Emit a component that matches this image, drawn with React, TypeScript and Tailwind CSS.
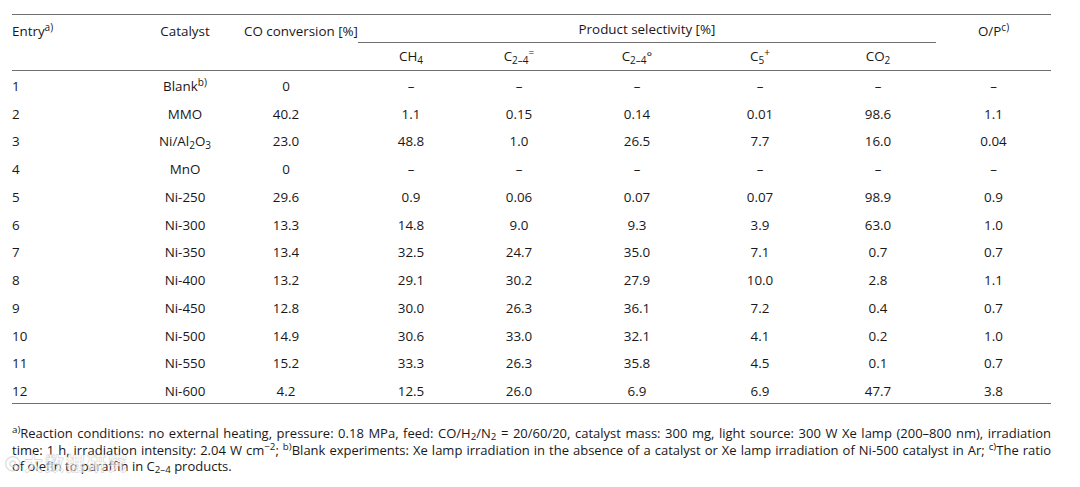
const rows: [string, React.ReactNode, string, string, string, string, string, string, string][] = [
  ["1", <>Blank<sup>b)</sup></>, "0", "–", "–", "–", "–", "–", "–"],
  ["2", "MMO", "40.2", "1.1", "0.15", "0.14", "0.01", "98.6", "1.1"],
  ["3", <>Ni/Al<sub>2</sub>O<sub>3</sub></>, "23.0", "48.8", "1.0", "26.5", "7.7", "16.0", "0.04"],
  ["4", "MnO", "0", "–", "–", "–", "–", "–", "–"],
  ["5", "Ni-250", "29.6", "0.9", "0.06", "0.07", "0.07", "98.9", "0.9"],
  ["6", "Ni-300", "13.3", "14.8", "9.0", "9.3", "3.9", "63.0", "1.0"],
  ["7", "Ni-350", "13.4", "32.5", "24.7", "35.0", "7.1", "0.7", "0.7"],
  ["8", "Ni-400", "13.2", "29.1", "30.2", "27.9", "10.0", "2.8", "1.1"],
  ["9", "Ni-450", "12.8", "30.0", "26.3", "36.1", "7.2", "0.4", "0.7"],
  ["10", "Ni-500", "14.9", "30.6", "33.0", "32.1", "4.1", "0.2", "1.0"],
  ["11", "Ni-550", "15.2", "33.3", "26.3", "35.8", "4.5", "0.1", "0.7"],
  ["12", "Ni-600", "4.2", "12.5", "26.0", "6.9", "6.9", "47.7", "3.8"],
];

const C24 = () => (
  <>
    C<sub>2–4</sub>
  </>
);

export default function App() {
  return (
    <div className="relative w-[1080px] h-[487px] bg-white text-[#1a1718] font-['Open_Sans','Noto_Sans',sans-serif] overflow-hidden">
      <div className="pl-3 pt-[14px]">
        <table className="w-[1039px] table-fixed border-collapse text-[13.4px]">
          <colgroup>
            <col className="w-[118px]" />
            <col className="w-[110px]" />
            <col className="w-[118px]" />
            <col className="w-[106px]" />
            <col className="w-[110px]" />
            <col className="w-[126px]" />
            <col className="w-[120px]" />
            <col className="w-[116px]" />
            <col className="w-[115px]" />
          </colgroup>
          <thead>
            <tr className="h-[28px] border-t-[1.5px] border-[#707070]">
              <th rowSpan={2} className="align-top pt-[6px] text-left font-normal">
                Entry<sup>a)</sup>
              </th>
              <th rowSpan={2} className="align-top pt-[6px] font-normal">
                Catalyst
              </th>
              <th rowSpan={2} className="align-top pt-[6px] font-normal text-right">
                CO conversion [%]
              </th>
              <th colSpan={5} className="font-normal border-b-[1.5px] border-[#707070] pt-[2px]">
                Product selectivity [%]
              </th>
              <th rowSpan={2} className="align-top pt-[6px] font-normal">
                O/P<sup>c)</sup>
              </th>
            </tr>
            <tr className="h-[28px] border-b-[1.5px] border-[#707070]">
              <th className="font-normal">
                CH<sub>4</sub>
              </th>
              <th className="font-normal">
                <C24 />
                <sup>=</sup>
              </th>
              <th className="font-normal">
                <C24 />°
              </th>
              <th className="font-normal">
                C<sub>5</sub>
                <sup>+</sup>
              </th>
              <th className="font-normal">
                CO<sub>2</sub>
              </th>
            </tr>
          </thead>
          <tbody className="border-b-[1.5px] border-[#707070]">
            {rows.map((r) => (
              <tr key={r[0]} className="h-[27.75px]">
                <td className="text-left pt-[3px]">{r[0]}</td>
                <td className="text-center pt-[3px]">{r[1]}</td>
                <td className="text-center pt-[3px] pr-[26px]">{r[2]}</td>
                {r.slice(3).map((v, i) => (
                  <td key={i} className="text-center pt-[3px]">
                    {v as string}
                  </td>
                ))}
              </tr>
            ))}
          </tbody>
        </table>

        {/* footnotes, one block per printed line */}
        <div className="w-[1039px] mt-[21px] text-[13px] leading-[16.5px]">
          <div className="text-justify [text-align-last:justify]">
            <sup>a)</sup>Reaction conditions: no external heating, pressure: 0.18 MPa, feed: CO/H
            <sub>2</sub>/N<sub>2</sub> = 20/60/20, catalyst mass: 300 mg, light source: 300 W Xe
            lamp (200–800 nm), irradiation
          </div>
          <div className="text-justify [text-align-last:justify]">
            time: 1 h, irradiation intensity: 2.04 W cm<sup>−2</sup>; <sup>b)</sup>Blank
            experiments: Xe lamp irradiation in the absence of a catalyst or Xe lamp irradiation of
            Ni-500 catalyst in Ar; <sup>c)</sup>The ratio
          </div>
          <div>
            of olefin to paraffin in <C24 /> products.
          </div>
        </div>
      </div>

      <div className="absolute left-[4px] top-[452px] flex items-center gap-[3px] text-[#cfcfcf] opacity-70">
        <span className="text-[20px] leading-none">◎</span>
        <span className="text-[19px] leading-none font-['Noto_Sans_CJK_SC',sans-serif] font-bold tracking-[2px] text-white [-webkit-text-stroke:0.6px_#c4c4c4]">
          大数据研究
        </span>
      </div>
    </div>
  );
}
